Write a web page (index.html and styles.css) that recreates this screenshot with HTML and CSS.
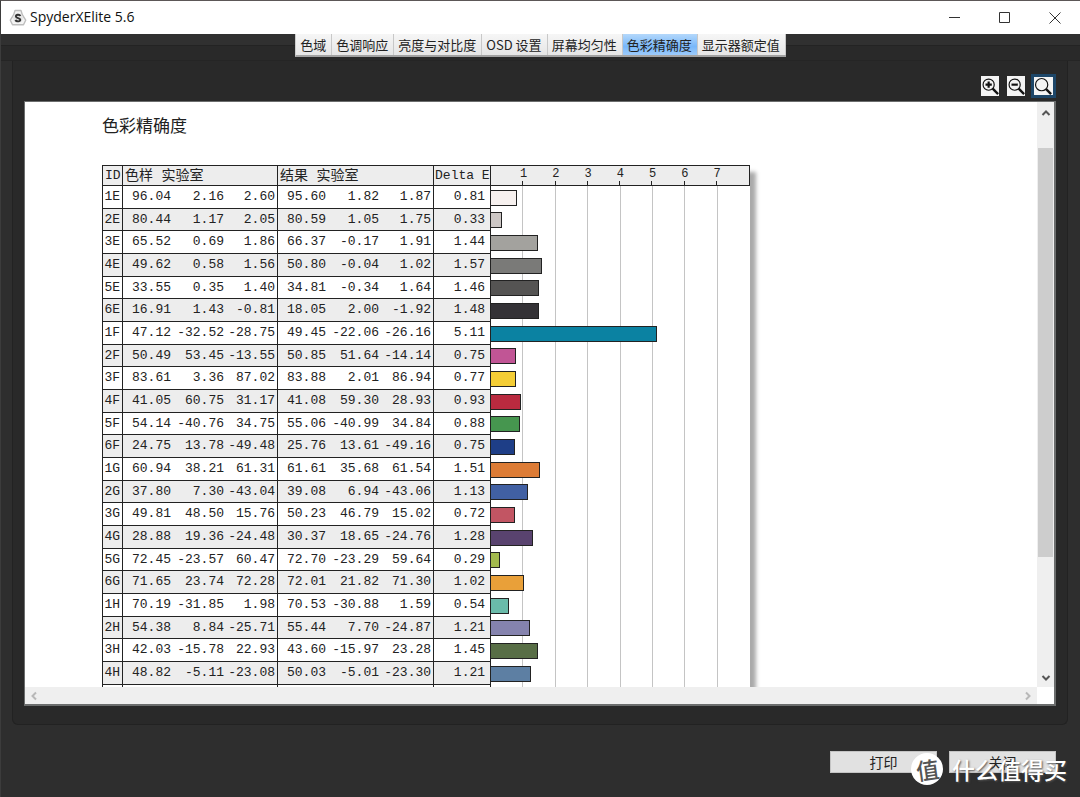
FILE: index.html
```html
<!DOCTYPE html>
<html lang="zh-CN">
<head>
<meta charset="utf-8">
<title>SpyderXElite 5.6</title>
<link rel="stylesheet" href="styles.css">
</head>
<body>
<div class="window">
  <header class="titlebar">
    <svg class="logo" viewBox="0 0 18 18" aria-hidden="true">
      <path d="M6 1.500h6l1.300 4.200 3.400 5.500-2.200 4.600H3.500L1.300 11.200l3.400-5.500z" fill="#f4f4f4" stroke="#bdbdbd" stroke-width="1.400" stroke-linejoin="round"/>
      <circle cx="9" cy="9" r="4.800" fill="#e4e4e4"/>
      <path d="M11.400 7C10.700 5.300 6.900 5.300 6.900 7.400c0 2.100 4.400 1.300 4.400 3.400 0 2-4 2-4.900.2" fill="none" stroke="#333" stroke-width="1.900"/>
    </svg>
    <span class="title">SpyderXElite 5.6</span>
    <div class="window-buttons">
      <button aria-label="最小化"><svg viewBox="0 0 12 12"><path d="M0 5.500h11"/></svg></button>
      <button aria-label="最大化"><svg viewBox="0 0 12 12"><path d="M.5.5h10v10H.5z"/></svg></button>
      <button aria-label="关闭窗口"><svg viewBox="0 0 12 12"><path d="M.5.5l11 11M11.500.5l-11 11"/></svg></button>
    </div>
  </header>

  <nav class="tabbar">
    <div class="tabs">
      <button>色域</button><button>色调响应</button><button>亮度与对比度</button><button>OSD 设置</button><button>屏幕均匀性</button><button class="active">色彩精确度</button><button>显示器额定值</button>
    </div>
  </nav>

  <main class="panel">
    <div class="toolbar">
      <button aria-label="放大"><svg viewBox="0 0 20 20"><circle cx="8.500" cy="8.500" r="6.200"/><path d="M13 13l6 6" stroke-width="2.600"/><path d="M5 8.500h7M8.500 5v7" stroke-width="2.400"/></svg></button>
      <button aria-label="缩小"><svg viewBox="0 0 20 20"><circle cx="8.500" cy="8.500" r="6.200"/><path d="M13 13l6 6" stroke-width="2.600"/><path d="M5 8.500h7" stroke-width="2.400"/></svg></button>
      <button class="active" aria-label="实际大小"><svg viewBox="0 0 20 20"><circle cx="8.500" cy="8.500" r="6.800"/><path d="M13.500 13.500l5.500 5.500" stroke-width="2.600"/></svg></button>
    </div>

    <div class="view">
      <section class="page">
        <h1>色彩精确度</h1>
        <div class="report">
          <table class="data">
            <colgroup><col class="c-id"><col class="c-l"><col class="c-a"><col class="c-b"><col class="c-l"><col class="c-a"><col class="c-b2"><col class="c-delta"></colgroup>
            <thead><tr><th>ID</th><th colspan="3">色样 实验室</th><th colspan="3">结果 实验室</th><th>Delta E</th></tr></thead>
            <tbody>
              <tr><td>1E</td><td>96.04</td><td>2.16</td><td>2.60</td><td>95.60</td><td>1.82</td><td>1.87</td><td>0.81</td></tr>
              <tr><td>2E</td><td>80.44</td><td>1.17</td><td>2.05</td><td>80.59</td><td>1.05</td><td>1.75</td><td>0.33</td></tr>
              <tr><td>3E</td><td>65.52</td><td>0.69</td><td>1.86</td><td>66.37</td><td>-0.17</td><td>1.91</td><td>1.44</td></tr>
              <tr><td>4E</td><td>49.62</td><td>0.58</td><td>1.56</td><td>50.80</td><td>-0.04</td><td>1.02</td><td>1.57</td></tr>
              <tr><td>5E</td><td>33.55</td><td>0.35</td><td>1.40</td><td>34.81</td><td>-0.34</td><td>1.64</td><td>1.46</td></tr>
              <tr><td>6E</td><td>16.91</td><td>1.43</td><td>-0.81</td><td>18.05</td><td>2.00</td><td>-1.92</td><td>1.48</td></tr>
              <tr><td>1F</td><td>47.12</td><td>-32.52</td><td>-28.75</td><td>49.45</td><td>-22.06</td><td>-26.16</td><td>5.11</td></tr>
              <tr><td>2F</td><td>50.49</td><td>53.45</td><td>-13.55</td><td>50.85</td><td>51.64</td><td>-14.14</td><td>0.75</td></tr>
              <tr><td>3F</td><td>83.61</td><td>3.36</td><td>87.02</td><td>83.88</td><td>2.01</td><td>86.94</td><td>0.77</td></tr>
              <tr><td>4F</td><td>41.05</td><td>60.75</td><td>31.17</td><td>41.08</td><td>59.30</td><td>28.93</td><td>0.93</td></tr>
              <tr><td>5F</td><td>54.14</td><td>-40.76</td><td>34.75</td><td>55.06</td><td>-40.99</td><td>34.84</td><td>0.88</td></tr>
              <tr><td>6F</td><td>24.75</td><td>13.78</td><td>-49.48</td><td>25.76</td><td>13.61</td><td>-49.16</td><td>0.75</td></tr>
              <tr><td>1G</td><td>60.94</td><td>38.21</td><td>61.31</td><td>61.61</td><td>35.68</td><td>61.54</td><td>1.51</td></tr>
              <tr><td>2G</td><td>37.80</td><td>7.30</td><td>-43.04</td><td>39.08</td><td>6.94</td><td>-43.06</td><td>1.13</td></tr>
              <tr><td>3G</td><td>49.81</td><td>48.50</td><td>15.76</td><td>50.23</td><td>46.79</td><td>15.02</td><td>0.72</td></tr>
              <tr><td>4G</td><td>28.88</td><td>19.36</td><td>-24.48</td><td>30.37</td><td>18.65</td><td>-24.76</td><td>1.28</td></tr>
              <tr><td>5G</td><td>72.45</td><td>-23.57</td><td>60.47</td><td>72.70</td><td>-23.29</td><td>59.64</td><td>0.29</td></tr>
              <tr><td>6G</td><td>71.65</td><td>23.74</td><td>72.28</td><td>72.01</td><td>21.82</td><td>71.30</td><td>1.02</td></tr>
              <tr><td>1H</td><td>70.19</td><td>-31.85</td><td>1.98</td><td>70.53</td><td>-30.88</td><td>1.59</td><td>0.54</td></tr>
              <tr><td>2H</td><td>54.38</td><td>8.84</td><td>-25.71</td><td>55.44</td><td>7.70</td><td>-24.87</td><td>1.21</td></tr>
              <tr><td>3H</td><td>42.03</td><td>-15.78</td><td>22.93</td><td>43.60</td><td>-15.97</td><td>23.28</td><td>1.45</td></tr>
              <tr><td>4H</td><td>48.82</td><td>-5.11</td><td>-23.08</td><td>50.03</td><td>-5.01</td><td>-23.30</td><td>1.21</td></tr>
              <tr><td></td><td></td><td></td><td></td><td></td><td></td><td></td><td></td></tr>
            </tbody>
          </table>
          <div class="chart">
            <div class="scale"><span>1</span><span>2</span><span>3</span><span>4</span><span>5</span><span>6</span><span>7</span></div>
            <div class="plot">
              <div class="gridlines"><i></i><i></i><i></i><i></i><i></i><i></i><i></i></div>
              <ul class="bars">
                <li><b style="--v:.81;--c:#f7f1ef"></b></li>
                <li><b style="--v:.33;--c:#cdc7c5"></b></li>
                <li><b style="--v:1.44;--c:#a3a29e"></b></li>
                <li><b style="--v:1.57;--c:#7a7a78"></b></li>
                <li><b style="--v:1.46;--c:#555453"></b></li>
                <li><b style="--v:1.48;--c:#343236"></b></li>
                <li><b style="--v:5.11;--c:#0b82a2"></b></li>
                <li><b style="--v:.77;--c:#c15595"></b></li>
                <li><b style="--v:.77;--c:#f4cd35"></b></li>
                <li><b style="--v:.93;--c:#b92a3f"></b></li>
                <li><b style="--v:.88;--c:#46964f"></b></li>
                <li><b style="--v:.75;--c:#1e3e87"></b></li>
                <li><b style="--v:1.51;--c:#dd7c36"></b></li>
                <li><b style="--v:1.13;--c:#4160a3"></b></li>
                <li><b style="--v:.74;--c:#c25563"></b></li>
                <li><b style="--v:1.28;--c:#59436f"></b></li>
                <li><b style="--v:.29;--c:#a2b94e"></b></li>
                <li><b style="--v:1.02;--c:#e9a039"></b></li>
                <li><b style="--v:.54;--c:#6abbaa"></b></li>
                <li><b style="--v:1.21;--c:#8583ae"></b></li>
                <li><b style="--v:1.45;--c:#586e46"></b></li>
                <li><b style="--v:1.22;--c:#5d7fa3"></b></li>
              </ul>
            </div>
          </div>
        </div>
      </section>
      <div class="vscroll" aria-hidden="true">
        <svg viewBox="0 0 10 10"><path d="M1.500 7L5 3.500 8.500 7"/></svg>
        <div class="track"><div class="thumb"></div></div>
        <svg viewBox="0 0 10 10"><path d="M1.500 3L5 6.500 8.500 3"/></svg>
      </div>
      <div class="hscroll" aria-hidden="true">
        <svg viewBox="0 0 10 10"><path d="M7 1.500L3.500 5 7 8.500"/></svg>
        <svg viewBox="0 0 10 10"><path d="M3 1.500L6.500 5 3 8.500"/></svg>
      </div>
      <div class="corner"></div>
    </div>
  </main>

  <footer class="actions">
    <button>打印</button>
    <button>关闭</button>
    <div class="watermark"><span class="seal"><span>值</span></span><span>什么值得买</span></div>
  </footer>
</div>
</body>
</html>
```
FILE: styles.css
```css
* {
  box-sizing: border-box;
}

body {
  margin: 0;
  font-family: "Noto Sans CJK SC", sans-serif;
  background: #2e2e2e;
}

button {
  margin: 0;
  padding: 0;
  border: 0;
  font: inherit;
}

.window {
  display: flex;
  flex-direction: column;
  height: 100vh;
  border-top: 1px solid #5c5757;
  border-left: 1px solid #3c3c3c;
  background: #2e2e2e;
  overflow: hidden;
}

/* Title bar */
.titlebar {
  display: flex;
  align-items: center;
  height: 33px;
  flex: none;
  padding-left: 8px;
  background: #fff;
}

.logo {
  width: 18px;
  height: 18px;
}

.title {
  margin-left: 3px;
  padding-bottom: 2px;
  font: 14px/20px "Open Sans", sans-serif;
  color: #111;
}

.window-buttons {
  display: flex;
  margin-left: auto;
}

.window-buttons button {
  display: grid;
  place-items: center;
  width: 50px;
  height: 32px;
  background: none;
}

.window-buttons svg {
  width: 12px;
  height: 12px;
  fill: none;
  stroke: #333;
}

/* Tabs */
.tabbar {
  display: flex;
  justify-content: center;
  align-items: flex-start;
  height: 27px;
  flex: none;
  background: linear-gradient(#303030 11px, #232323 11px 12px, #292929 12px 26px, #252525 26px);
}

.tabs {
  display: flex;
  border-bottom: 2px solid #a2a2a2;
  border-left: 1px solid #ccc;
}

.tabs button {
  height: 21px;
  padding: 0 5px 0 4px;
  border-right: 1px solid #c8c8c8;
  background: linear-gradient(#f6f6f6, #e6e6e6);
  color: #222;
  font-size: 13px;
  line-height: 19px;
  white-space: nowrap;
}

.tabs .active {
  background: linear-gradient(#b4d8fb, #78b7fa 60%, #9dcbfb);
}

/* Panel */
.panel {
  display: flex;
  flex-direction: column;
  flex: 1;
  min-height: 0;
  margin: 0 12px 0 11px;
  padding: 0 11px 18px;
  border: 1px solid #222;
  border-top: 0;
  border-radius: 0 0 6px 6px;
  background: #292929;
}

.toolbar {
  display: flex;
  justify-content: flex-end;
  gap: 4px;
  height: 40px;
  flex: none;
  padding-top: 13px;
}

.toolbar button {
  width: 22px;
  height: 24px;
  border: 2px solid #292929;
  background: #f4f4f4;
}

.toolbar .active {
  width: 25px;
  border: 3px solid #1d4668;
}

.toolbar svg {
  display: block;
  width: 18px;
  height: 18px;
  fill: none;
  stroke: #111;
  stroke-width: 1.3;
}

.view {
  display: grid;
  grid-template-columns: minmax(0, 1fr) 17px;
  grid-template-rows: minmax(0, 1fr) 17px;
  flex: 1;
  min-height: 0;
  border: 2px solid #6b6d6d;
  border-left-width: 1px;
  border-top-width: 1px;
  background: #fff;
}

/* Report page */
.page {
  padding: 11px 0 0 77px;
  overflow: hidden;
}

h1 {
  margin: 0 0 28px;
  color: #222;
  font-size: 17px;
  font-weight: 400;
  line-height: 24px;
}

.report {
  display: flex;
  width: 648px;
  box-shadow: 6px 7px 4px #aaa;
}

.data {
  flex: none;
  width: 389px;
  table-layout: fixed;
  border-collapse: separate;
  border-spacing: 0;
  border-left: 1px solid #222;
  background: #fff;
  color: #222;
  font: 13px/18px "Liberation Mono", "Noto Sans CJK SC", monospace;
}

.c-id { width: 20px; }
.c-l { width: 48px; }
.c-a { width: 53px; }
.c-b { width: 54px; }
.c-b2 { width: 55px; }
.c-delta { width: 57px; }

.data th,
.data td {
  padding: 0;
  border-bottom: 1px solid #222;
  text-align: right;
  white-space: nowrap;
}

.data th {
  height: 21px;
  padding-left: 1px;
  border-top: 1px solid #222;
  border-right: 1px solid #222;
  background: #ededed;
  font-weight: 400;
  text-align: left;
}

.data th:first-child {
  padding-left: 2px;
}

.data th[colspan] {
  padding-left: 2px;
  font-size: 14px;
}

.data td {
  height: 23px;
}

.data tr:nth-child(3n + 2) td {
  height: 22px;
}

.data tr:nth-child(even) td {
  background: #ededed;
}

.data td:first-child,
.data td:nth-child(4),
.data td:nth-child(7),
.data td:last-child {
  padding-right: 2px;
  border-right: 1px solid #222;
}

.data td:last-child {
  padding-right: 5px;
}

.chart {
  display: flex;
  flex-direction: column;
  flex: 1;
  background: #fff;
}

.scale,
.gridlines {
  display: grid;
  grid-template-columns: repeat(8, 1fr);
}

.scale {
  height: 21px;
  border: 1px solid #222;
  border-left: 0;
  background: #ededed;
  color: #222;
  font: 12px/17px "Liberation Mono", monospace;
}

.scale span {
  display: flex;
  justify-content: flex-end;
  height: 19px;
  margin-right: -4px;
  background: linear-gradient(#222, #222) right 4px bottom / 1px 4px no-repeat;
}

.plot {
  position: relative;
  flex: 1;
}

.gridlines {
  position: absolute;
  inset: 0;
}

.gridlines i {
  border-right: 1px solid #c4c4c4;
}

.bars {
  position: relative;
  margin: 0;
  padding: 0;
  list-style: none;
}

.bars li {
  display: flex;
  align-items: center;
  height: 23px;
}

.bars li:nth-child(3n + 2) {
  height: 22px;
}

.bars b {
  width: calc(var(--v) * 12.55%);
  height: 16px;
  border: 1px solid #222;
  border-left: 0;
  background: var(--c);
}

/* Scroll bars */
.vscroll,
.hscroll {
  display: flex;
  align-items: center;
  background: #efefef;
}

.vscroll {
  flex-direction: column;
  padding: 5px 0 3px;
}

.hscroll {
  justify-content: space-between;
  padding: 0 4px;
}

.vscroll svg,
.hscroll svg {
  width: 10px;
  height: 12px;
  flex: none;
  fill: none;
  stroke: #555;
  stroke-width: 2;
}

.hscroll svg {
  stroke: #b8b8b8;
}

.track {
  display: flex;
  flex-direction: column;
  width: 100%;
  flex: 1;
  padding: 29px 1px 0;
}

.thumb {
  height: 78%;
  background: #cdcdcd;
}

.corner {
  background: #fff;
}

/* Bottom actions */
.actions {
  position: relative;
  display: flex;
  justify-content: flex-end;
  gap: 12px;
  height: 72px;
  flex: none;
  padding: 26px 24px 0 0;
}

.actions button {
  width: 107px;
  height: 22px;
  border: 1px solid #c4c4c4;
  background: #e1e1e1;
  color: #222;
  font-size: 14px;
  line-height: 16px;
}

.watermark {
  position: absolute;
  right: 13px;
  bottom: 12px;
  display: flex;
  align-items: center;
  gap: 9px;
  color: #fff;
  font-size: 23px;
  font-weight: 500;
  line-height: 32px;
  text-shadow: 1px 1px 2px #555;
}

.seal {
  display: grid;
  place-items: center;
  width: 32px;
  height: 32px;
  border-radius: 50%;
  background: #fff;
  color: #555;
  text-shadow: none;
}

.seal span {
  transform: rotate(-8deg);
}
```
